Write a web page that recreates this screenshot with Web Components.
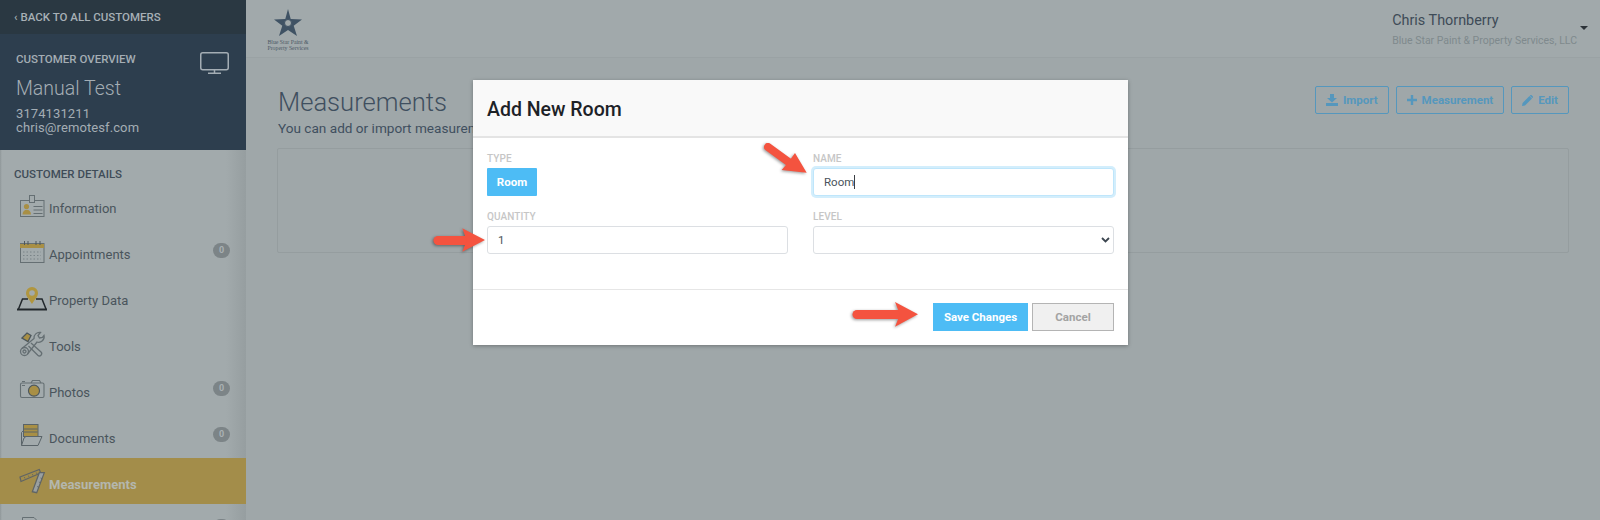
<!DOCTYPE html>
<html lang="en">
<head>
<meta charset="utf-8">
<title>Add New Room</title>
<style>
  html, body { margin: 0; height: 520px; overflow: hidden; background: #9fa7a9; }
  body { font-family: Roboto, "Liberation Sans", sans-serif; font-size: 14px; color: #3d4a55; }
  #app { display: flex; height: 520px; position: relative; overflow: hidden; }
  svg { display: block; }
</style>
</head>
<body>
<div id="app">
  <app-sidebar>
    <nav-item label="Information">
      <svg slot="icon" width="33" height="46" viewBox="0 0 33 46" fill="none" stroke="#656f73"><rect x="4.500" y="18.500" width="23.500" height="16"/><rect x="13.500" y="13.500" width="5" height="7" fill="#a2aaac"/><circle cx="10.500" cy="24.500" r="2.600" fill="#a88f45" stroke="none"/><path d="M6.500 32.500c0-6.500 8.500-6.500 8.500 0z" fill="#a88f45" stroke="none"/><path d="M17.500 24.500h9M17.500 28h9M17.500 31.500h9"/></svg>
    </nav-item>
    <nav-item label="Appointments" badge="0">
      <svg slot="icon" width="33" height="46" viewBox="0 0 33 46" fill="none" stroke="#656f73"><rect x="4.500" y="15.500" width="23.500" height="19"/><rect x="4" y="16" width="24" height="4" fill="#a88f45" stroke="none"/><path d="M8.500 13v4M12 13v4M20 13v4M24 13v4" stroke="#4d575c"/><path d="M7 24h18M7 27.500h18M7 31h18" stroke-dasharray="1.500 2" stroke="#7a8488"/></svg>
    </nav-item>
    <nav-item label="Property Data">
      <svg slot="icon" width="33" height="46" viewBox="0 0 33 46" fill="none"><path d="M2.500 35L6.500 25H12M20 25h6l4 10" stroke="#22282c" stroke-width="1.500"/><path d="M1 35.500h30" stroke="#22282c" stroke-width="2"/><path d="M16 30c-2.500-4.500-6-7-6-11a6 6 0 0 1 12 0c0 4-3.500 6.500-6 11z" fill="#b0963f"/><circle cx="16" cy="19" r="2.800" fill="#a2aaac"/></svg>
    </nav-item>
    <nav-item label="Tools">
      <svg slot="icon" width="33" height="46" viewBox="0 0 33 46" fill="none" stroke="#656f73" stroke-width="1.300"><g transform="translate(4 12)"><circle cx="4.500" cy="19.500" r="4"/><circle cx="4.500" cy="19.500" r="1.500"/><path d="M2 16.500L14 6.500a5.500 5.500 0 0 1 6.500-6l-2.500 3 1.500 2.500 3-.5 1.500-2a5.500 5.500 0 0 1-7 6.500L7.500 22"/><path d="M11 11l10 9a2.300 2.300 0 0 1-3.200 3.300L8.500 14"/><path d="M2 6l5-5 4 2.500L8 9.500z" fill="#a88f45" stroke="#4d575c"/></g></svg>
    </nav-item>
    <nav-item label="Photos" badge="0">
      <svg slot="icon" width="33" height="46" viewBox="0 0 33 46" fill="none" stroke="#656f73" stroke-width="1.100"><path d="M15 17l1.500-2.500h7L25 17"/><rect x="4.500" y="17" width="23.500" height="14.500" rx="1.500"/><path d="M6 15.500h3M6 19.500h3" stroke-width="1"/><circle cx="18" cy="24.700" r="5.500" fill="#a88f45" stroke="#4d575c" stroke-width="1.200"/></svg>
    </nav-item>
    <nav-item label="Documents" badge="0">
      <svg slot="icon" width="33" height="46" viewBox="0 0 33 46" fill="none" stroke="#5a6469"><rect x="7.500" y="12.500" width="14.500" height="12" fill="#a88f45"/><path d="M8 17h13.500M8 20h13.500"/><path d="M7.500 18.500L5.500 20.500V33.500" /><path d="M10 24.500H26L22 33.500H5.500L8 26z" fill="#a2aaac"/></svg>
    </nav-item>
    <nav-item label="Measurements" active>
      <svg slot="icon" width="33" height="46" viewBox="0 0 33 46" fill="none" stroke="#5f6465" stroke-width="1.200"><path d="M4 19L23.300 11.500 24.700 15 5 23.500z"/><path d="M23.300 14.700L28.300 14.700 20.700 34.700 16.300 33.700z" fill="#9aa0a0"/><path d="M9 20.500l-.7-1.500M13 19l-.7-1.500M17 17.500l-.7-1.500M21 16l-.7-1.500M24.500 20l2 .8M22.800 24l2 .8M21 28.500l2 .8" stroke-width=".8"/></svg>
    </nav-item>
    <nav-item badge="">
      <svg slot="icon" width="33" height="46" viewBox="0 0 33 46" fill="none" stroke="#656f73"><path d="M6.500 46V13.500H18L24 19.500V46"/></svg>
    </nav-item>
  </app-sidebar>

  <main-area></main-area>

  <room-modal></room-modal>

  <red-arrow style="left:760px;top:135px" tail="8,12,30,28,8" head="35,18 46.700,37.700 21.700,35 28.500,27"></red-arrow>
  <red-arrow style="left:425px;top:225px" tail="13,15.500,44,15.500,9" head="37.300,3.300 60,15 37.300,26.700 41.700,15.500"></red-arrow>
  <red-arrow style="left:845px;top:295px" tail="12,19.500,57,19.500,9" head="50,7 73,19.300 50,31.700 55,19.500"></red-arrow>
</div>

<script>
function html(strings) {
  const t = document.createElement('template');
  t.innerHTML = strings[0];
  return t;
}

const sidebarTpl = html`
  <style>
    :host {
      display: flex; flex-direction: column; flex: 0 0 246px; width: 246px; height: 520px;
      background: linear-gradient(to right, #8f9799 0, #a2aaac 2px, #a2aaac 226px, #969ea0 246px);
      overflow: hidden;
    }
    .back {
      flex: 0 0 34px; background: #2a3842; color: #a7b0b6; display: flex; align-items: center;
      padding-left: 14px; font-size: 11.500px; font-weight: 500; gap: 3px;
    }
    .overview {
      flex: 0 0 116px; box-sizing: border-box; background: #2d3e4e; color: #a4adb4;
      padding: 18px 16px 0 16px;
    }
    .over-head { display: flex; justify-content: space-between; align-items: flex-start; }
    .over-title { font-size: 11.500px; font-weight: 500; line-height: 14px; }
    .name { font-size: 19.500px; font-weight: 300; line-height: 24px; margin-top: 11px; }
    .contact { font-size: 13px; line-height: 14px; margin-top: 6px; letter-spacing: .1px; }
    h4 {
      margin: 0; flex: 0 0 32px; box-sizing: border-box; padding: 17px 0 0 14px;
      font-size: 11.500px; line-height: 14px; font-weight: 500; color: #3f4c58;
    }
  </style>
  <div class="back"><span>&#8249;</span><span>BACK TO ALL CUSTOMERS</span></div>
  <div class="overview">
    <div class="over-head">
      <span class="over-title">CUSTOMER OVERVIEW</span>
      <svg width="29" height="22" viewBox="0 0 29 22" fill="none" stroke="#a4adb4" stroke-width="1.500" style="margin:0 1px -8px 0"><rect x=".75" y=".75" width="27.500" height="17" rx="2"/><path d="M14.500 18v3M8 21.250h13"/></svg>
    </div>
    <div class="name">Manual Test</div>
    <div class="contact">3174131211<br>chris@remotesf.com</div>
  </div>
  <h4>CUSTOMER DETAILS</h4>
  <slot></slot>
`;
class AppSidebar extends HTMLElement {
  constructor() {
    super();
    this.attachShadow({ mode: 'open' });
    this.shadowRoot.appendChild(sidebarTpl.content.cloneNode(true));
  }
}
customElements.define('app-sidebar', AppSidebar);

const navTpl = html`
  <style>
    :host {
      display: flex; flex: 0 0 46px; height: 46px; box-sizing: border-box; align-items: center;
      padding-left: 16px; font-size: 13px; color: #4a555c;
    }
    :host([active]) { background: #a38d4a; color: #b4b7ae; font-weight: 700; }
    .ic { flex: 0 0 33px; width: 33px; height: 46px; }
    .label { margin-top: 7px; }
    .badge {
      margin-left: auto; margin-right: 16px; margin-top: -2px; width: 17px; height: 15px; border-radius: 8px;
      background: #7c8487; color: #a9b0b3; font-size: 9px; font-weight: 700;
      display: none; align-items: center; justify-content: center;
    }
    :host([badge]) .badge { display: flex; }
  </style>
  <span class="ic"><slot name="icon"></slot></span>
  <span class="label"></span>
  <span class="badge"></span>
`;
class NavItem extends HTMLElement {
  constructor() {
    super();
    this.attachShadow({ mode: 'open' });
    this.shadowRoot.appendChild(navTpl.content.cloneNode(true));
  }
  connectedCallback() {
    this.shadowRoot.querySelector('.label').textContent = this.getAttribute('label') || '';
    this.shadowRoot.querySelector('.badge').textContent = this.getAttribute('badge') || '';
  }
}
customElements.define('nav-item', NavItem);

const btnTpl = html`
  <style>
    :host {
      display: inline-flex; align-items: center; justify-content: center; gap: 5px;
      height: 28px; box-sizing: border-box; border: 1px solid #5597bd; border-radius: 2px;
      color: #5597bd; font-size: 11.500px; font-weight: 700; padding: 0 10px;
    }
  </style>
  <slot name="icon"></slot><slot></slot>
`;
class OutlineBtn extends HTMLElement {
  constructor() {
    super();
    this.attachShadow({ mode: 'open' });
    this.shadowRoot.appendChild(btnTpl.content.cloneNode(true));
  }
}
customElements.define('outline-btn', OutlineBtn);

const mainTpl = html`
  <style>
    :host { display: flex; flex-direction: column; flex: 1; min-width: 0; }
    header {
      flex: 0 0 58px; box-sizing: border-box; border-bottom: 1px solid #9aa2a4;
      background: #a1a9ab; display: flex; justify-content: space-between; padding: 0 12px 0 17px;
    }
    .logo { width: 50px; padding-top: 9px; display: flex; flex-direction: column; align-items: center; }
    .logo span { font: 5.800px/5.500px "Liberation Serif", serif; color: #4d5a66; text-align: center; white-space: nowrap; margin-top: 4px; }
    .user { display: flex; gap: 3px; }
    .who { padding-top: 12px; }
    .who b { display: block; font-weight: 400; font-size: 14.400px; line-height: 17px; color: #3e4b57; }
    .who small { display: block; font-size: 10.500px; line-height: 13px; margin-top: 5px; color: #7f898d; }
    .caret { width: 0; height: 0; border: 4.500px solid transparent; border-top-color: #2c3338; border-bottom: 0; margin-top: 26px; }
    .body { padding: 29px 32px 0 32px; }
    .head { display: flex; justify-content: space-between; }
    h1 { margin: 0; font-weight: 300; font-size: 25.600px; line-height: 30px; color: #3f4f5f; }
    p { margin: 3px 0 0; font-size: 13.600px; line-height: 16px; color: #3f4f5f; }
    .actions { display: flex; gap: 7px; margin: -1px -1px 0 0; }
    .panel {
      margin: 12px -1px 0 -1px; height: 105px; box-sizing: border-box; border: 1px solid #959d9f;
      border-radius: 2px; background: #9fa7a9;
    }
  </style>
  <header>
    <div class="logo">
      <svg width="28" height="27" viewBox="0 0 28 27"><path fill="#3f5264" d="M14 0l2.700 10L28 10.500l-8.300 6.300L23 27l-9-6-9 6 3.300-10.200L0 10.500 11.300 10z"/><circle cx="14" cy="14" r="3.500" fill="#a1a9ab" stroke="#3f5264"/></svg>
      <span>Blue Star Paint &amp;<br>Property Services</span>
    </div>
    <div class="user">
      <div class="who"><b>Chris Thornberry</b><small>Blue Star Paint &amp; Property Services, LLC</small></div>
      <span class="caret"></span>
    </div>
  </header>
  <div class="body">
    <div class="head">
      <div><h1>Measurements</h1><p>You can add or import measurements</p></div>
      <div class="actions">
        <outline-btn><svg slot="icon" width="12" height="12" viewBox="0 0 12 12" fill="#5597bd"><path d="M4 0h4v4h3L6 8.500 1 4h3zM0 9h12v3H0z"/></svg>Import</outline-btn>
        <outline-btn><svg slot="icon" width="10" height="10" viewBox="0 0 10 10" fill="#5597bd"><path d="M3.800 0h2.400v3.800H10v2.400H6.200V10H3.800V6.200H0V3.800h3.800z"/></svg>Measurement</outline-btn>
        <outline-btn><svg slot="icon" width="11" height="11" viewBox="0 0 11 11" fill="#5597bd"><path d="M0 11l.6-3L7.500 1 10 3.500 3 10.400zM8.300.3a1 1 0 0 1 1.400 0l1 1a1 1 0 0 1 0 1.400l-.4.4L7.800.7z"/></svg>Edit</outline-btn>
      </div>
    </div>
    <div class="panel"></div>
  </div>
`;
class MainArea extends HTMLElement {
  constructor() {
    super();
    this.attachShadow({ mode: 'open' });
    this.shadowRoot.appendChild(mainTpl.content.cloneNode(true));
  }
}
customElements.define('main-area', MainArea);

const fieldTpl = html`
  <style>
    :host { display: block; }
    label { display: block; font-size: 10px; line-height: 12px; font-weight: 500; color: #c6c6c6; margin-bottom: 3px; letter-spacing: .1px; }
  </style>
  <label></label>
  <slot></slot>
`;
class FormField extends HTMLElement {
  constructor() {
    super();
    this.attachShadow({ mode: 'open' });
    this.shadowRoot.appendChild(fieldTpl.content.cloneNode(true));
  }
  connectedCallback() {
    this.shadowRoot.querySelector('label').textContent = this.getAttribute('label');
  }
}
customElements.define('form-field', FormField);

const modalTpl = html`
  <style>
    :host {
      display: flex; flex-direction: column; position: absolute; left: 473px; top: 80px;
      width: 655px; height: 265px; background: #fff; box-shadow: 0 1px 4px rgba(0,0,0,.3);
    }
    .top {
      flex: 0 0 58px; box-sizing: border-box; background: #f9f9f9; border-bottom: 2px solid #e4e4e4;
      display: flex; align-items: center; padding: 2px 14px 0;
    }
    h3 { margin: 0; font-size: 19.500px; font-weight: 500; color: #1d2227; }
    .form {
      flex: 0 0 152px; box-sizing: border-box; border-bottom: 1px solid #e6e6e6;
      display: grid; grid-template-columns: 301px 301px; column-gap: 25px; row-gap: 15px;
      padding: 15px 14px 0; align-content: start;
    }
    .type {
      width: 50px; height: 28px; box-sizing: border-box; background: #4dbcf5; color: #fff;
      border-radius: 1px; font-size: 11.500px; font-weight: 700;
      display: flex; align-items: center; justify-content: center;
    }
    .input {
      height: 28px; box-sizing: border-box; border: 1px solid #dcdfe3; border-radius: 3px;
      background: #fff; display: flex; align-items: center; padding: 0 10px; font-size: 11.500px; color: #49535b;
    }
    .input.focus { border-color: #bfe6fb; box-shadow: 0 0 0 2px #d3eefc; }
    .cursor { width: 1px; height: 14px; background: #3a3f44; }
    .select { justify-content: flex-end; padding-right: 3px; }
    .foot { flex: 1; display: flex; justify-content: flex-end; gap: 4px; padding: 13px 14px 0; align-items: flex-start; }
    .btn {
      height: 28px; box-sizing: border-box; font-size: 11.500px; font-weight: 700;
      display: flex; align-items: center; justify-content: center;
    }
    .save { width: 95px; background: #4dbcf5; color: #fff; }
    .cancel { width: 82px; background: #f0f0f0; color: #a3a3a3; border: 1px solid #b4b4b4; }
  </style>
  <div class="top"><h3>Add New Room</h3></div>
  <div class="form">
    <form-field label="TYPE"><div class="type">Room</div></form-field>
    <form-field label="NAME"><div class="input focus">Room<span class="cursor"></span></div></form-field>
    <form-field label="QUANTITY"><div class="input">1</div></form-field>
    <form-field label="LEVEL"><div class="input select"><svg width="9" height="6" viewBox="0 0 9 6" fill="none" stroke="#3c4650" stroke-width="1.800"><path d="M1 1l3.500 3.500L8 1"/></svg></div></form-field>
  </div>
  <div class="foot">
    <div class="btn save">Save Changes</div>
    <div class="btn cancel">Cancel</div>
  </div>
`;
class RoomModal extends HTMLElement {
  constructor() {
    super();
    this.attachShadow({ mode: 'open' });
    this.shadowRoot.appendChild(modalTpl.content.cloneNode(true));
  }
}
customElements.define('room-modal', RoomModal);

class RedArrow extends HTMLElement {
  constructor() {
    super();
    this.attachShadow({ mode: 'open' });
  }
  connectedCallback() {
    const [x1, y1, x2, y2, w] = this.getAttribute('tail').split(',');
    this.shadowRoot.innerHTML = `
      <style>
        :host { display: block; position: absolute; width: 80px; height: 42px; }
        svg { display: block; overflow: visible; filter: drop-shadow(-.5px 1.500px 1.500px rgba(0,0,0,.4)); }
      </style>
      <svg width="80" height="42" fill="#f4533f">
        <line x1="${x1}" y1="${y1}" x2="${x2}" y2="${y2}" stroke="#f4533f" stroke-width="${w}" stroke-linecap="round"/>
        <polygon points="${this.getAttribute('head')}"/>
      </svg>`;
  }
}
customElements.define('red-arrow', RedArrow);
</script>
</body>
</html>
